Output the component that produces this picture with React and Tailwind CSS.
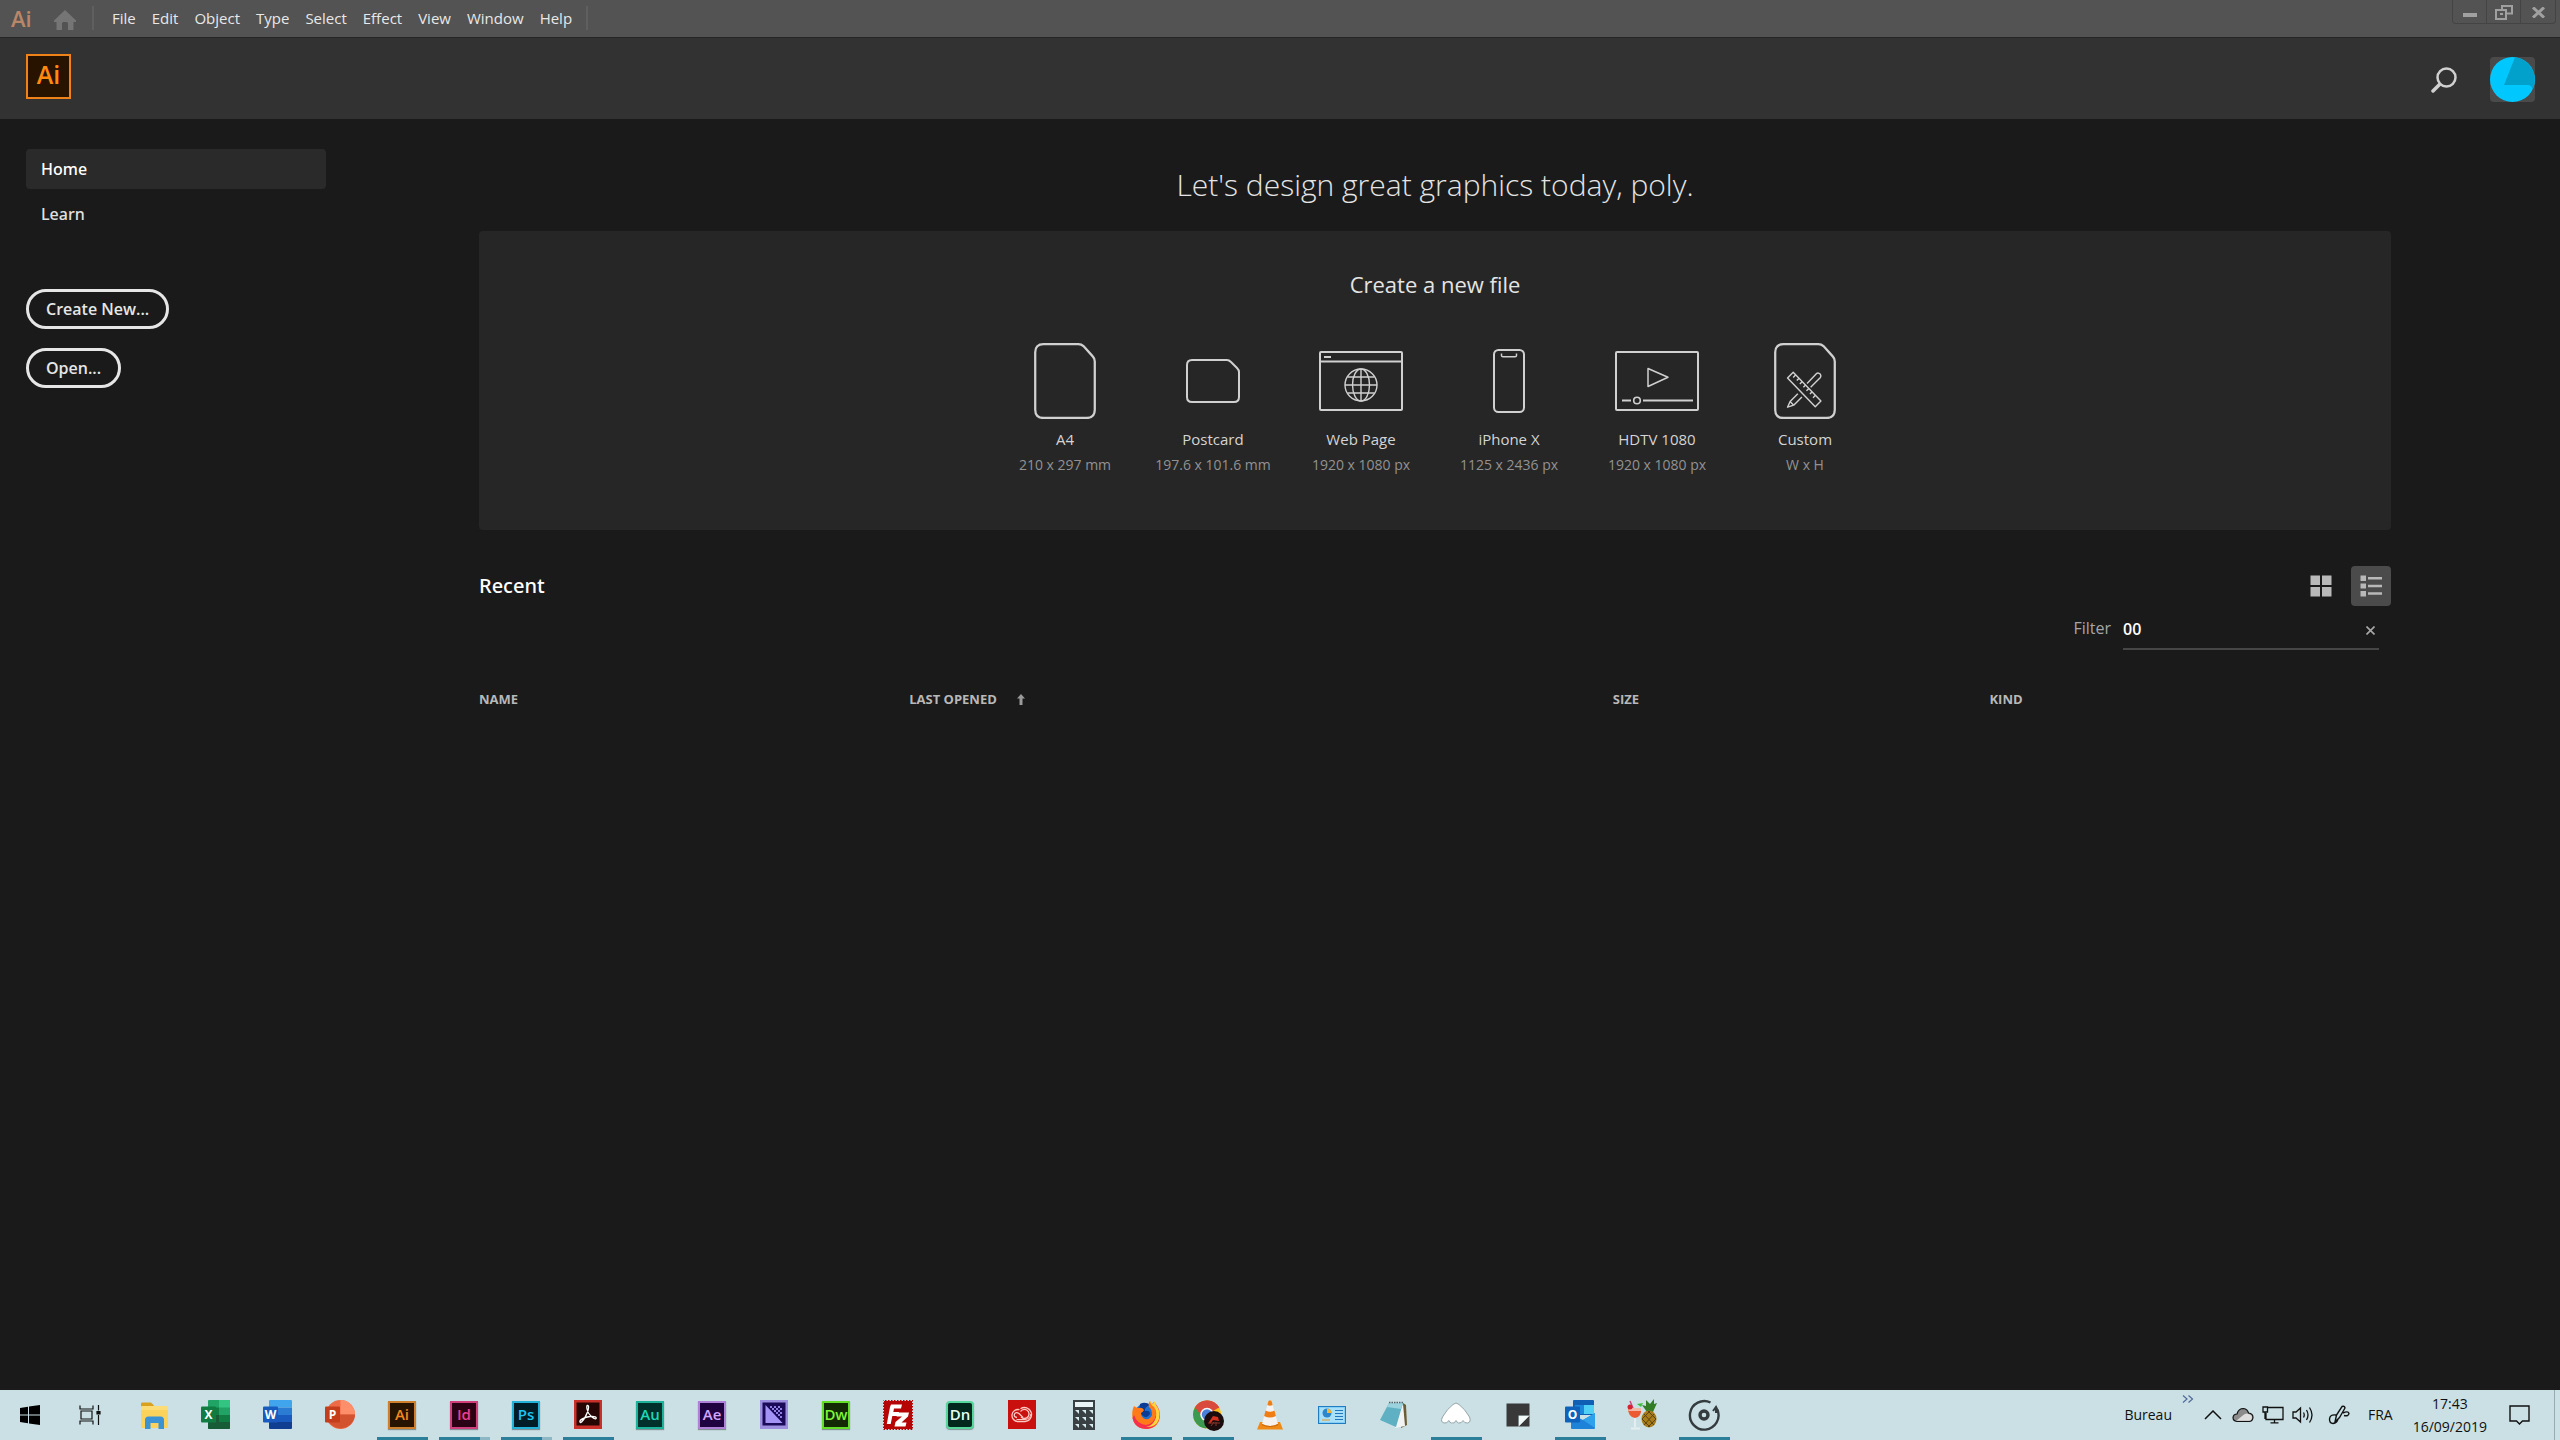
import React from "react";

const MENUS = ["File", "Edit", "Object", "Type", "Select", "Effect", "View", "Window", "Help"];

/* ---------- preset drawings ---------- */

function A4Icon() {
  return (
    <svg width="62" height="76" viewBox="0 0 60 74" fill="none" stroke="#d0d0d0" strokeWidth="2.200">
      <path d="M9 1.200H43Q46 1.200 48 3L57 13Q59 15 59 18V65Q59 73 51 73H9Q1 73 1 65V9Q1 1.200 9 1.200Z" />
    </svg>
  );
}

function PostcardIcon() {
  return (
    <svg width="54" height="44" viewBox="0 0 54 44" fill="none" stroke="#d0d0d0" strokeWidth="2">
      <path d="M6 1H41Q43 1 45 3L51 9Q53 11 53 13V38Q53 43 48 43H6Q1 43 1 38V6Q1 1 6 1Z" />
    </svg>
  );
}

function WebIcon() {
  return (
    <svg width="86" height="60" viewBox="0 0 86 60" fill="none" stroke="#d0d0d0" strokeWidth="2">
      <rect x="2" y="1" width="82" height="58" rx="1" />
      <path d="M2 10.500H84" />
      <path d="M6 6H13" />
      <g strokeWidth="1.400">
        <circle cx="43" cy="34" r="16" />
        <ellipse cx="43" cy="34" rx="8.500" ry="16" />
        <path d="M43 18V50M27 34H59M29.500 26H56.500M29.500 42H56.500" />
      </g>
    </svg>
  );
}

function PhoneIcon() {
  return (
    <svg width="32" height="64" viewBox="0 0 32 64" fill="none" stroke="#d0d0d0" strokeWidth="2">
      <rect x="1" y="1" width="30" height="62" rx="4.500" />
      <path d="M8.500 4.500V6.500Q8.500 7.800 10 7.800H22Q23.500 7.800 23.500 6.500V4.500" strokeWidth="1.500" />
    </svg>
  );
}

function HdtvIcon() {
  return (
    <svg width="86" height="60" viewBox="0 0 86 60" fill="none" stroke="#d0d0d0" strokeWidth="2">
      <rect x="2" y="1" width="82" height="58" rx="1" />
      <path d="M34 17.500V35.500L54 26.300Z" strokeWidth="1.500" strokeLinejoin="round" />
      <circle cx="23" cy="49.500" r="3.300" strokeWidth="1.600" />
      <path d="M8 49.500H17M29 49.500H79" />
    </svg>
  );
}

function CustomIcon() {
  return (
    <svg width="62" height="76" viewBox="0 0 60 74" fill="none" stroke="#d0d0d0" strokeWidth="2.200">
      <path d="M9 1.200H43Q46 1.200 48 3L57 13Q59 15 59 18V65Q59 73 51 73H9Q1 73 1 65V9Q1 1.200 9 1.200Z" />
      <g strokeWidth="1.400" strokeLinejoin="round">
        <path d="M18.500 28.500L45.500 56.500L40 62L13 34Z" />
        <path d="M21 31L18.500 33.500M24.200 34.300L22 36.500M27.400 37.600L25 40M30.600 40.900L28.400 43.100M33.800 44.200L31.400 46.600M37 47.500L34.800 49.700M40.200 50.800L37.800 53.200" />
        <path d="M32 39.500L41.500 29.500Q43 28.500 45 30.500Q46 32 45 33.500L35.500 43" />
        <path d="M23 49.500L15.500 57L13 62.500L19 60.500L27 52.500M15.500 57L19 60.500" />
      </g>
    </svg>
  );
}

const PRESETS = [
  { name: "A4", size: "210 x 297 mm", Icon: A4Icon },
  { name: "Postcard", size: "197.6 x 101.6 mm", Icon: PostcardIcon },
  { name: "Web Page", size: "1920 x 1080 px", Icon: WebIcon },
  { name: "iPhone X", size: "1125 x 2436 px", Icon: PhoneIcon },
  { name: "HDTV 1080", size: "1920 x 1080 px", Icon: HdtvIcon },
  { name: "Custom", size: "W x H", Icon: CustomIcon },
];

/* ---------- taskbar drawings ---------- */

const Svg = ({ children, size = 32 }) => (
  <svg width={size} height={size} viewBox="0 0 32 32" fill="none">{children}</svg>
);

function Tile({ text, className }) {
  return (
    <span className={"flex size-7 items-center justify-center border-2 text-[15px] leading-none font-semibold shadow-[0_1px_1px_rgba(0,0,0,0.35)] " + className}>
      {text}
    </span>
  );
}

const Letter = ({ x, y, children }) => (
  <text x={x} y={y} fill="#fff" fontSize="12" fontWeight="700" textAnchor="middle" fontFamily="Open Sans, sans-serif">{children}</text>
);

const ExplorerIcon = () => (
  <Svg>
    <path d="M3 4.500Q3 3.500 4 3.500H13L16 6.500V9H3Z" fill="#d9a11e" />
    <rect x="3" y="7" width="27" height="21" rx="1" fill="#fcdc74" />
    <path d="M3 11H30V28Q30 29 29 29H4Q3 29 3 28Z" fill="#fbd35c" />
    <path d="M7 30V21Q7 17.500 10.500 17.500H22.500Q26 17.500 26 21V30H20.500V24H12.500V30Z" fill="#3b93d3" />
  </Svg>
);

const ExcelIcon = () => (
  <Svg>
    <rect x="8" y="1" width="22" height="29" rx="1" fill="#21a366" />
    <path d="M19 1H29Q30 1 30 2V8.500H19Z" fill="#33c481" />
    <path d="M8 8.500H19V16H8Z" fill="#107c41" />
    <path d="M8 16H19V23H8Z" fill="#185c37" />
    <path d="M19 16H30V23H19Z" fill="#107c41" />
    <path d="M8 23H30V29Q30 30 29 30H9Q8 30 8 29Z" fill="#185c37" />
    <rect x="1" y="7.500" width="15" height="16" rx="1" fill="#107c41" />
    <Letter x="8.500" y="20">X</Letter>
  </Svg>
);

const WordIcon = () => (
  <Svg>
    <path d="M7 2Q7 1 8 1H29Q30 1 30 2V8.500H7Z" fill="#41a5ee" />
    <path d="M7 8.500H30V16H7Z" fill="#2b7cd3" />
    <path d="M7 16H30V23H7Z" fill="#185abd" />
    <path d="M7 23H30V29Q30 30 29 30H8Q7 30 7 29Z" fill="#103f91" />
    <rect x="1" y="7.500" width="15" height="16" rx="1" fill="#185abd" />
    <Letter x="8.500" y="20">W</Letter>
  </Svg>
);

const PowerPointIcon = () => (
  <Svg>
    <circle cx="16.500" cy="15.500" r="14.500" fill="#ed6c47" />
    <path d="M16.500 1A14.500 14.500 0 0 1 31 15.500H16.500Z" fill="#ff8f6b" />
    <path d="M31 15.500A14.500 14.500 0 0 1 3 20L16.500 15.500Z" fill="#d35230" />
    <rect x="1" y="7.500" width="15" height="16" rx="1" fill="#c43e1c" />
    <Letter x="8.500" y="20">P</Letter>
  </Svg>
);

const AcrobatIcon = () => (
  <Svg>
    <rect x="2" y="1" width="28" height="29" fill="#c9302a" />
    <rect x="4.500" y="3.500" width="23" height="23" fill="#250605" />
    <path d="M8 23C7 21 13 18 18 17.500C23 17 25 18.500 24 19.500C22.500 21 16 16 15 10C14.500 7 15 6 16 6.500C18 8 14 19 9.500 23Q8.500 24 8 23Z" stroke="#fff" strokeWidth="1.300" />
  </Svg>
);

const EncoderIcon = () => (
  <Svg>
    <rect x="2" y="1" width="28" height="29" fill="#9c8fe0" />
    <rect x="4.500" y="3.500" width="23" height="23" fill="#1b0a57" />
    <path d="M7.500 6L24.500 24H7.500Z" fill="#a393f5" />
    <path d="M12 7h2v2h-2zM16 7h2v2h-2zM20 7h2v2h-2zM14 9h2v2h-2zM18 9h2v2h-2zM22 9h2v2h-2zM16 11h2v2h-2zM20 11h2v2h-2zM18 13h2v2h-2zM22 13h2v2h-2zM20 15h2v2h-2zM22 17h2v2h-2z" fill="#8f80e6" />
  </Svg>
);

const FileZillaIcon = () => (
  <Svg>
    <rect x="1" y="1" width="30" height="30" fill="#b50505" />
    <rect x="1.500" y="1.500" width="29" height="29" stroke="#cae0e5" strokeDasharray="1.500 1.500" />
    <path d="M9 5.500H20L19 9.500H12L11.300 13H17L16 17H10.300L8.700 25H4.800L8 8Z" fill="#fff" />
    <path d="M15.500 13.500H27L26 17.500L19.500 23.500H24.500L23.500 27.500H12.500L13.500 23L20 17.500H14.600Z" fill="#fff" />
  </Svg>
);

const CloudAppIcon = () => (
  <Svg>
    <rect x="2" y="1" width="28" height="29" fill="#c9100e" />
    <g stroke="#ffc9c2" strokeWidth="1.300">
      <path d="M14.500 9.800A7 7 0 1 1 19 22.500H12A6 6 0 1 1 13.500 10.700" />
      <path d="M11 18.500Q7.500 18 8.500 15Q10 12.500 13 14.500L17 18.500" />
      <path d="M14.500 12.500A4.600 4.600 0 1 1 18.500 19.500Q16.500 19.500 15 18" />
      <path d="M10.500 20.500H19A5.800 5.800 0 0 0 24.800 15" strokeWidth="1" />
    </g>
  </Svg>
);

const CalculatorIcon = () => (
  <Svg>
    <rect x="5" y="1" width="22" height="30" fill="#394144" />
    <rect x="7" y="3" width="18" height="5" fill="#e9f4f6" />
    <path d="M7 11h4v4zM14 11h4v4zM21 11h4v4zM7 18h4v4zM14 18h4v4zM21 18h4v4zM7 25h4v4zM14 25h4v4zM21 25h4v4z" fill="#d8ebef" />
  </Svg>
);

const FirefoxIcon = () => (
  <Svg>
    <circle cx="16" cy="16.500" r="12" fill="#1f6fd0" />
    <path d="M10 5Q15 2 20 6Q14 8 15 12Q20 11 20 15Q17 20 13 17Q8 13 10 5Z" fill="#0a3c96" />
    <path d="M4 7Q6 9 9 9Q12 8 14 11Q13 13 11 14Q11 18 15 20Q20 21 22 16Q22 10 19 8Q18 4 20 2Q21 5 24 6Q30 11 30 17Q29 29 17 30Q5 30 2.500 19Q1.500 12 4 7Z" fill="#ff7a18" />
    <path d="M4 16Q7 25 16 26Q24 25 26 16Q26 9 22 5L24 3Q30 9 30 17Q28 29 17 30Q5 30 2.500 19Z" fill="#f5304d" />
    <path d="M20 2Q20 5 24 8Q28 14 25 21Q22 27 16 28Q26 29 29 20Q31 12 26 6Q25 4 25 2Q23 4 23 5Q21 4 20 2Z" fill="#ffd53d" />
  </Svg>
);

const ChromeIcon = () => (
  <Svg>
    <circle cx="15" cy="15.500" r="14" fill="#fbc116" />
    <path d="M15 15.500L2.900 8.500A14 14 0 0 1 27.100 8.500Z" fill="#d9493c" />
    <path d="M15 15.500L2.900 8.500A14 14 0 0 0 14 29.500L21 19Z" fill="#3a9a50" />
    <path d="M15 9H27.400A14 14 0 0 0 3 8.300L9.500 17Z" fill="#d9493c" />
    <circle cx="15" cy="15.500" r="6.800" fill="#f4f7f8" />
    <circle cx="15" cy="15.500" r="5.200" fill="#4a7fdb" />
    <circle cx="22" cy="22" r="10" fill="#1b0c0d" />
    <path d="M17 23L21 17L26 18L27 22L21 21L18 25Z" fill="#d8311f" />
    <path d="M16 24H28M19 27L22 23M24 27V23" stroke="#88352b" />
  </Svg>
);

const VlcIcon = () => (
  <Svg>
    <path d="M6 23H26L29 30.500H3Z" fill="#ef8a17" />
    <path d="M14.500 2Q16 0.500 17.500 2L24 25Q16 29 8 25Z" fill="#f4f1ee" />
    <path d="M14.500 2Q16 0.500 17.500 2L18.700 6Q16 7.300 13.300 6Z" fill="#ee7e14" />
    <path d="M11.600 11.500Q16 14 20.400 11.500L21.900 17Q16 20 10.100 17Z" fill="#ee7e14" />
    <path d="M8 25Q16 29 24 25L24.500 26Q16 30 7.500 26Z" fill="#c9690b" />
  </Svg>
);

const PanelCardIcon = () => (
  <Svg>
    <rect x="2.500" y="7.500" width="27" height="17" fill="#86d0f5" stroke="#1f7cc0" />
    <rect x="4" y="9" width="24" height="14" fill="#a8e0fa" />
    <circle cx="11" cy="14" r="4.500" fill="#2b86cc" />
    <path d="M11 14V9.500A4.500 4.500 0 0 1 15.500 14Z" fill="#f3b63a" />
    <path d="M19 11.500H27M19 14.500H27M19 17.500H27M19 20.500H27" stroke="#2378bd" />
    <path d="M6 21H14" stroke="#e89a22" />
  </Svg>
);

const NotebookIcon = () => (
  <Svg>
    <path d="M25 4L28 6L29 26L23 29Z" fill="#6d5c35" />
    <path d="M25 5L27 27L17 29L20 14Z" fill="#f2f4f3" />
    <path d="M11 4L25 4L18 28L2 21Z" fill="#5fb0c2" />
    <path d="M11 4L25 4L23 10L9 8Z" fill="#9ad3dd" />
    <path d="M11 3.500H26" stroke="#57666a" strokeWidth="1.500" strokeDasharray="1.500 1" />
  </Svg>
);

const PeakIcon = () => (
  <Svg>
    <path d="M13 5.500Q16 2.500 19 5.500Q25 10 29.500 18Q31.500 23 27.500 24Q24.500 24.500 23 21.500Q21.500 24.500 18.500 24Q17 23.500 16 21.500Q14.500 25 11.500 24Q9.500 23.500 9 21.500Q7 24.500 4 24Q0 23 2.500 18Q7 10 13 5.500Z" fill="#fff" stroke="#95a5a8" />
  </Svg>
);

const StickyIcon = () => (
  <Svg>
    <path d="M4.500 4.500H27.500V16.500H16.500V27.500H4.500Z" fill="#393939" />
    <path d="M27.500 16.500V27.500H16.500Z" fill="#393939" />
    <path d="M17 17H27L17 27Z" fill="#f3f8f9" />
  </Svg>
);

const OutlookIcon = () => (
  <Svg>
    <rect x="9" y="1" width="21" height="15" rx="1" fill="#0f5fb4" />
    <path d="M11 6H20V15H11Z" fill="#1a86dc" />
    <path d="M20 6H30V15H20Z" fill="#50d0f5" />
    <path d="M7 15L19 21L31 14V29Q31 30 30 30H8Q7 30 7 29Z" fill="#1c83d8" />
    <path d="M19 21L31 14V29Z" fill="#2fa0ea" />
    <rect x="1" y="7.500" width="15" height="16" rx="1" fill="#0f62bb" />
    <Letter x="8.500" y="20">O</Letter>
  </Svg>
);

const CocktailIcon = () => (
  <Svg>
    <path d="M4 2L9 14" stroke="#c94a80" strokeWidth="1.500" />
    <path d="M11 5L17 4L15 8Z" fill="#3fbf3a" />
    <path d="M2 9H15Q16 18 9 19Q2 18 2 9Z" fill="#ec5a33" />
    <path d="M2.500 9H15V12H2.500Z" fill="#f1b9a5" />
    <circle cx="4" cy="8" r="2.500" fill="#d92230" />
    <path d="M9 19V28M5 29.500H14" stroke="#e4eef0" strokeWidth="2" />
    <path d="M21 13L16 6L20 7L20 1L24 5L28 0L28 5L31 4L27 13Z" fill="#327d25" />
    <ellipse cx="23" cy="20" rx="7.500" ry="8.500" fill="#a87c1a" />
    <path d="M18 15L28 26M16 20L24 28M22 12L30 20M28 15L18 26M30 20L22 28M24 12L16 20" stroke="#5e430c" strokeWidth="1" />
  </Svg>
);

const GrooveIcon = () => (
  <Svg>
    <path d="M29.500 11A14.300 14.300 0 1 1 22.500 3.500" stroke="#343c3f" strokeWidth="2.400" />
    <path d="M25 12L28 8L30 12M28 8V14" stroke="#343c3f" strokeWidth="2" />
    <circle cx="16" cy="16" r="4" stroke="#343c3f" strokeWidth="3.400" />
  </Svg>
);

const APPS = [
  { name: "File Explorer", icon: <ExplorerIcon /> },
  { name: "Excel", icon: <ExcelIcon /> },
  { name: "Word", icon: <WordIcon /> },
  { name: "PowerPoint", icon: <PowerPointIcon /> },
  { name: "Illustrator", icon: <Tile text="Ai" className="border-[#cd7f2c] bg-[#261300] text-[#f7861c]" />, open: 1 },
  { name: "InDesign", icon: <Tile text="Id" className="border-[#d03f7c] bg-[#2b0213] text-[#f03e90]" />, open: 2 },
  { name: "Photoshop", icon: <Tile text="Ps" className="border-[#22b2d8] bg-[#001c27] text-[#1fc4f0]" />, open: 2 },
  { name: "Acrobat", icon: <AcrobatIcon />, open: 1 },
  { name: "Audition", icon: <Tile text="Au" className="border-[#1cb299] bg-[#00302b] text-[#1ed6b8]" /> },
  { name: "After Effects", icon: <Tile text="Ae" className="border-[#ae80d8] bg-[#1f0340] text-[#d4a5fc]" /> },
  { name: "Media Encoder", icon: <EncoderIcon /> },
  { name: "Dreamweaver", icon: <Tile text="Dw" className="border-[#62df24] bg-[#142a04] text-[#7ff53a]" /> },
  { name: "FileZilla", icon: <FileZillaIcon /> },
  { name: "Dimension", icon: <Tile text="Dn" className="rounded-sm border-[#55d69a] bg-[#02271c] text-[#e6fff3]" /> },
  { name: "Creative Cloud", icon: <CloudAppIcon /> },
  { name: "Calculator", icon: <CalculatorIcon /> },
  { name: "Firefox", icon: <FirefoxIcon />, open: 1 },
  { name: "Chrome", icon: <ChromeIcon />, open: 1 },
  { name: "VLC", icon: <VlcIcon /> },
  { name: "Control Panel", icon: <PanelCardIcon /> },
  { name: "Notepad", icon: <NotebookIcon /> },
  { name: "Peak", icon: <PeakIcon />, open: 1 },
  { name: "Sticky Notes", icon: <StickyIcon /> },
  { name: "Outlook", icon: <OutlookIcon />, open: 1 },
  { name: "Cocktail", icon: <CocktailIcon /> },
  { name: "Groove Music", icon: <GrooveIcon />, open: 1 },
];

/* ---------- page parts ---------- */

function MenuBar() {
  return (
    <header className="flex h-[38px] items-start justify-between border-b border-[#262626] bg-[#535353]">
      <div className="flex h-[35px] items-center">
        <span className="w-[43px] pl-[11px] text-[22px] leading-none font-semibold text-[#b98768]">Ai</span>
        <button type="button" aria-label="Home screen" className="mt-1 ml-[11px]">
          <svg width="22" height="20" viewBox="0 0 22 20" fill="#757575">
            <path d="M11 0L22 10.500V12H19.500V20H14V13.500Q14 12 12.500 12H9.500Q8 12 8 13.500V20H2.500V12H0V10.500Z" />
          </svg>
        </button>
        <span className="ml-4 h-6 w-0.5 bg-[#5f5f5f]" />
        <nav className="ml-[18px] flex gap-4">
          {MENUS.map((m) => (
            <button key={m} type="button" className="text-[15px] leading-5 text-[#e8e8e8]">{m}</button>
          ))}
        </nav>
        <span className="ml-3.5 h-6 w-0.5 bg-[#5f5f5f]" />
      </div>
      <div className="mr-1 flex h-6 divide-x divide-[#444444] rounded-b border-x border-b border-[#444444]">
        <button type="button" aria-label="Minimize" className="flex w-[34px] items-center justify-center pt-1">
          <svg width="14" height="14" viewBox="0 0 14 14" fill="#a0a0a0"><path d="M0 6H14V10H0Z" /></svg>
        </button>
        <button type="button" aria-label="Restore" className="flex w-[34px] items-center justify-center pt-0.5">
          <svg width="18" height="15" viewBox="0 0 18 15" fill="none" stroke="#a0a0a0" strokeWidth="2">
            <path d="M1 5H11V14H1ZM7 5V1H17V8.500H11" /><path d="M5 9H8" />
          </svg>
        </button>
        <button type="button" aria-label="Close" className="flex w-[34px] items-center justify-center pt-0.5">
          <svg width="13" height="11" viewBox="0 0 13 11" stroke="#a0a0a0" strokeWidth="3"><path d="M1 0.500L12 10.500M12 0.500L1 10.500" /></svg>
        </button>
      </div>
    </header>
  );
}

function AppBar() {
  return (
    <div className="flex h-[81px] items-center justify-between bg-[#323232] pr-[25px] pl-[26px]">
      <div className="mb-1 flex size-[45px] items-center justify-center border-2 border-[#f0821a] bg-[#271300] pb-1 text-[25px] leading-none font-semibold text-[#ff8a10]">
        Ai
      </div>
      <div className="flex items-center pt-0.5">
        <button type="button" aria-label="Search" className="mr-[33px]">
          <svg width="26" height="26" viewBox="0 0 26 26" fill="none" stroke="#d0d0d0" strokeLinecap="round">
            <circle cx="15.500" cy="10.500" r="9" strokeWidth="2.500" />
            <path d="M8.500 17.500L2 24" strokeWidth="3.500" />
          </svg>
        </button>
        <button type="button" aria-label="Account" className="overflow-hidden rounded bg-[#4a4a4a]">
          <svg width="45" height="45" viewBox="0 0 45 45">
            <circle cx="22.500" cy="22.500" r="22.500" fill="#00c8ff" />
            <path d="M25 0.200A22.500 22.500 0 0 1 42.500 32.500Q41.500 28 38 28H14Z" fill="#02a1cc" />
          </svg>
        </button>
      </div>
    </div>
  );
}

function Sidebar() {
  return (
    <aside className="w-[352px] shrink-0 px-[26px] pt-[30px]">
      <nav className="flex flex-col gap-[5px] font-['Noto_Sans',sans-serif] text-base font-medium">
        <a href="#home" className="flex h-10 items-center rounded bg-[#2a2a2a] px-[15px] text-white">Home</a>
        <a href="#learn" className="flex h-10 items-center rounded px-[15px] text-[#e0e0e0]">Learn</a>
      </nav>
      <div className="mt-[55px] flex flex-col items-start gap-[19px] text-base font-semibold text-[#e6e6e6]">
        <button type="button" className="h-10 rounded-full border-3 border-[#e6e6e6] px-[17px]">Create New...</button>
        <button type="button" className="h-10 rounded-full border-3 border-[#e6e6e6] px-[17px]">Open...</button>
      </div>
    </aside>
  );
}

function Presets() {
  return (
    <section className="rounded bg-[#262626] pt-[37px] pb-[53px]">
      <h2 className="text-center text-[22px] leading-8 text-[#e4e4e4]">Create a new file</h2>
      <div className="mt-[43px] flex justify-center">
        {PRESETS.map(({ name, size, Icon }) => (
          <button key={name} type="button" className="flex w-[148px] flex-col items-center">
            <span className="flex h-[76px] items-center justify-center"><Icon /></span>
            <span className="mt-2 text-[15px] leading-[25px] text-[#d4d4d4]">{name}</span>
            <span className="text-sm leading-[25px] text-[#929292]">{size}</span>
          </button>
        ))}
      </div>
    </section>
  );
}

function Recent() {
  return (
    <section className="mt-[36px]">
      <div className="flex items-center justify-between">
        <h2 className="font-['Noto_Sans',sans-serif] text-xl font-medium text-white">Recent</h2>
        <div className="flex gap-2.5">
          <button type="button" aria-label="Grid view" className="flex size-10 items-center justify-center rounded">
            <svg width="22" height="22" viewBox="0 0 22 22" fill="#b9b9b9"><path d="M0.500 0.500h9.500v9.500h-9.500zM12 0.500h9.500v9.500h-9.500zM0.500 12h9.500v9.500h-9.500zM12 12h9.500v9.500h-9.500z" /></svg>
          </button>
          <button type="button" aria-label="List view" className="flex size-10 items-center justify-center rounded bg-[#4b4b4b]">
            <svg width="22" height="22" viewBox="0 0 22 22" fill="#b9b9b9"><path d="M0.500 0.500h5.500v5.500h-5.500zM0.500 8.500h5.500v5h-5.500zM0.500 16h5.500v5.500h-5.500zM8 2h14v2.500h-14zM8 9.700h14v2.500h-14zM8 17.300h14v2.500h-14z" /></svg>
          </button>
        </div>
      </div>
      <div className="mr-3 flex items-stretch justify-end">
        <label htmlFor="filter" className="mr-3 pt-2.5 text-base text-[#a6a6a6]">Filter</label>
        <div className="flex h-11 w-64 items-center border-b-2 border-[#464646]">
          <input id="filter" type="text" defaultValue="00" className="min-w-0 flex-1 bg-transparent pt-1 text-base font-semibold text-white outline-none" />
          <button type="button" aria-label="Clear filter" className="mt-1.5 mr-[3px] p-px">
            <svg width="9" height="9" viewBox="0 0 9 9" stroke="#a8a8a8" strokeWidth="1.600"><path d="M0.500 0.500L8.500 8.500M8.500 0.500L0.500 8.500" /></svg>
          </button>
        </div>
      </div>
      <table className="mt-[39px] w-full table-fixed text-left text-[13px] leading-5 text-[#b8b8b8]">
        <thead>
          <tr>
            <th className="w-[22.5%] font-bold">NAME</th>
            <th className="w-[36.8%] font-bold" aria-sort="ascending">
              <button type="button" className="flex items-center gap-5 font-bold">
                LAST OPENED
                <svg width="8" height="11" viewBox="0 0 8 11" fill="#9a9a9a"><path d="M4 0L8 4.500H5.500V11H2.500V4.500H0Z" /></svg>
              </button>
            </th>
            <th className="w-[19.7%] font-bold">SIZE</th>
            <th className="font-bold">KIND</th>
          </tr>
        </thead>
      </table>
    </section>
  );
}

function Taskbar() {
  return (
    <footer className="flex h-[50px] items-stretch justify-between bg-[#cae0e5] text-[#101010]">
      <div className="flex">
        <button type="button" aria-label="Start" className="flex w-[60px] items-center justify-center">
          <svg width="20" height="20" viewBox="0 0 20 20" fill="#000"><path d="M0 3L8 1.800V9.500H0ZM9 1.600L20 0V9.500H9ZM0 10.500H8V18.200L0 17ZM9 10.500H20V20L9 18.400Z" /></svg>
        </button>
        <button type="button" aria-label="Task view" className="mr-[3px] flex w-[60px] items-center justify-center">
          <svg width="22" height="20" viewBox="0 0 22 20" fill="none" stroke="#111" strokeWidth="1.200">
            <path d="M1 0.500V4H14V0.500M1 19.500V16H14V19.500M2 6H13V14H2ZM19.500 0V5.500M19.500 10V20" /><path d="M18 6.500H21V9H18Z" fill="#111" />
          </svg>
        </button>
        {APPS.map(({ name, icon, open }) => (
          <button key={name} type="button" aria-label={name} className="flex w-[62px] flex-col items-center">
            <span className="flex h-[47px] items-center justify-center pt-0.5">{icon}</span>
            {open && (
              <span className="flex h-[3px] w-[51px] bg-[#8db7c4]">
                <span className={open === 2 ? "w-[41px] bg-[#2b7f99]" : "w-full bg-[#2b7f99]"} />
              </span>
            )}
          </button>
        ))}
      </div>
      <div className="flex items-center text-sm">
        <span>Bureau</span>
        <button type="button" aria-label="More items" className="mb-8 ml-2.5">
          <svg width="12" height="8" viewBox="0 0 12 8" fill="none" stroke="#52699a" strokeWidth="1.200"><path d="M1 0.500L5 4L1 7.500M6.500 0.500L10.500 4L6.500 7.500" /></svg>
        </button>
        <button type="button" aria-label="Hidden icons" className="ml-2.5">
          <svg width="18" height="10" viewBox="0 0 18 10" fill="none" stroke="#111" strokeWidth="1.500"><path d="M1 9L9 1L17 9" /></svg>
        </button>
        <svg width="22" height="16" viewBox="0 0 22 16" className="ml-2.5">
          <path d="M5 14.500Q1 14 1 10.500Q1.500 7 5 7Q6.500 1.500 11.500 1.500Q15.500 2 16.500 6Q21 6.500 21 10.500Q20.500 14.500 17 14.500Z" fill="#8b8b8b" stroke="#111" strokeWidth="1.200" />
          <path d="M4 14L12 7.500Q15 6 16.500 7Q20 7.500 20 10.500Q19.500 13.800 17 13.800H5Z" fill="#dedede" />
        </svg>
        <svg width="22" height="18" viewBox="0 0 22 18" fill="none" stroke="#111" strokeWidth="1.300" className="ml-2">
          <path d="M6 1.500H21V13.500H4V7M1 1H5.500V6H1ZM3 6V13M12.500 13.500V16.500M8.500 16.800H16.500" />
        </svg>
        <svg width="22" height="18" viewBox="0 0 22 18" fill="none" stroke="#111" strokeWidth="1.300" className="ml-2">
          <path d="M1 6H4L8.500 2V16L4 12H1ZM11.500 6.500Q13 9 11.500 11.500M14.500 4Q17.500 9 14.500 14M17.500 1.500Q22.500 9 17.500 16.500" />
        </svg>
        <svg width="22" height="20" viewBox="0 0 22 20" fill="none" stroke="#111" strokeWidth="1.400" className="ml-3.5">
          <path d="M7 17L8.500 10L14 1.500Q16.500 0.500 17 3L11.500 12.500ZM8 10Q2 9 1.500 14Q1.500 18.500 5 18.500Q9 18 10 14M15 8Q20 5.500 21 8.500Q20.500 11.500 16 10.500" />
        </svg>
        <span className="ml-[18px]">FRA</span>
        <div className="ml-5 text-center leading-[23px]">
          <div>17:43</div>
          <div>16/09/2019</div>
        </div>
        <button type="button" aria-label="Notifications" className="ml-[22px]">
          <svg width="21" height="20" viewBox="0 0 21 20" fill="none" stroke="#111" strokeWidth="1.400"><path d="M1 1H20V16H13.500L10.500 19L7.500 16H1Z" /></svg>
        </button>
        <span className="mr-[5px] ml-6 h-full w-px bg-[#98abb0]" />
      </div>
    </footer>
  );
}

export default function App() {
  return (
    <div className="flex min-h-screen flex-col bg-[#1a1a1a] font-['Open_Sans','Noto_Sans',sans-serif]">
      <MenuBar />
      <AppBar />
      <div className="flex flex-1">
        <Sidebar />
        <main className="min-w-0 flex-1 pt-10 pr-[169px] pl-[127px]">
          <h1 className="mb-5 text-center text-[30px] leading-[52px] font-light text-[#e4e4e4]">Let's design great graphics today, poly.</h1>
          <Presets />
          <Recent />
        </main>
      </div>
      <Taskbar />
    </div>
  );
}
